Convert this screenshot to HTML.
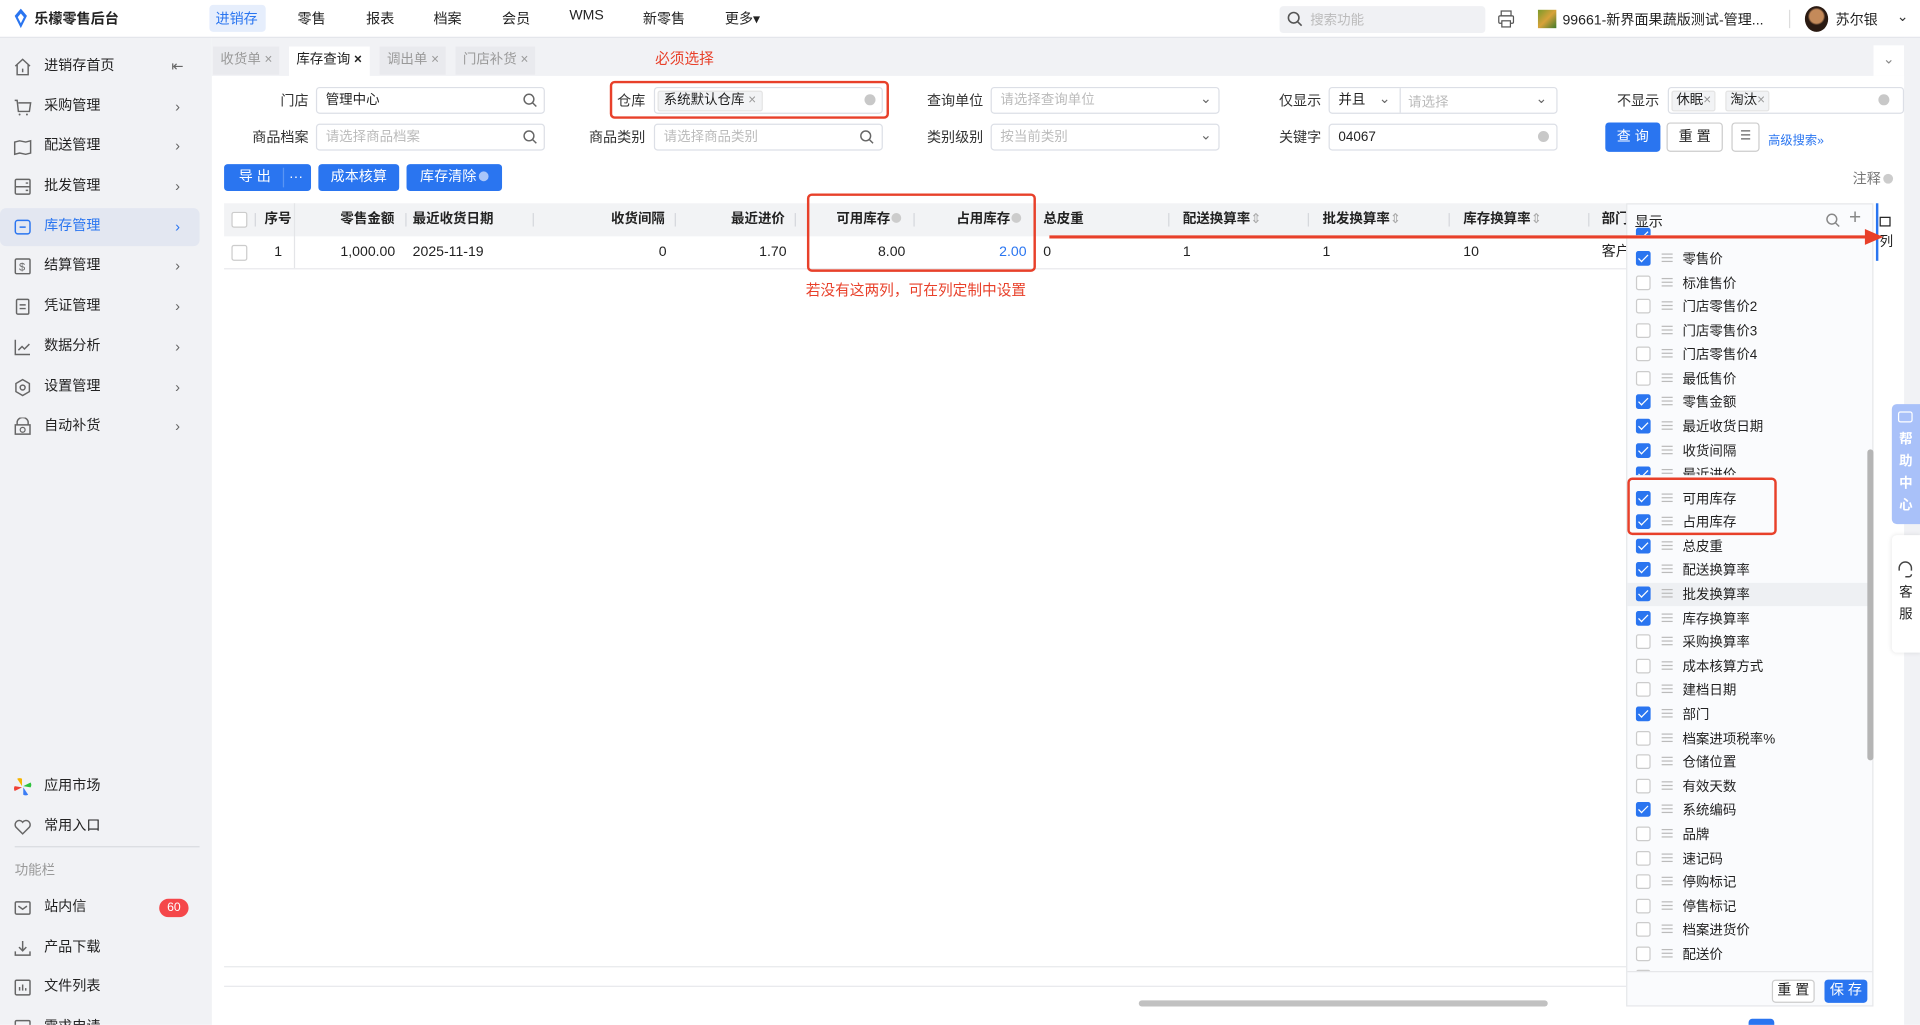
<!DOCTYPE html>
<html><head><meta charset="utf-8">
<style>
*{margin:0;padding:0;box-sizing:border-box}
html,body{width:1920px;height:1025px;overflow:hidden;background:#fff}
body{font-family:"Liberation Sans","Noto Sans CJK SC",sans-serif;font-size:11.5px;color:#222}
#w{position:absolute;left:0;top:0;width:1568px;height:837px;transform:scale(1.22449);transform-origin:0 0;background:#fff;overflow:hidden}
.a{position:absolute;white-space:nowrap}
.hdr{left:0;top:0;width:1568px;height:31px;background:#fff;border-bottom:1px solid #e3e5ea}
.nav{top:7px;font-size:11.5px;color:#222}
.side{left:0;top:31px;width:173px;height:806px;background:#f1f2f5}
.si{left:0;width:163px;height:30px;line-height:30px;font-size:11.5px}
.si .t{position:absolute;left:36px}
.si .ch{position:absolute;left:143px;color:#666;font-size:12px}
.si svg{position:absolute;left:11px;top:8px}
.tabs{left:173px;top:31px;width:1395px;height:31px;background:#f1f2f5}
.tab{top:38px;height:23px;line-height:22px;background:#e9eaee;color:#999;padding:0 6px;font-size:11px}
.lbl{font-size:11.5px;color:#333;text-align:right}
.inp{height:22px;border:1px solid #dcdfe6;border-radius:3px;background:#fff;font-size:11px;line-height:20px;padding-left:7px;color:#bbb}
.btn{height:22px;line-height:22px;background:#2a75f0;color:#fff;border-radius:3px;text-align:center;font-size:11.5px}
.th{top:166px;height:27px;line-height:27px;font-weight:bold;font-size:11px;color:#222}
.td{top:193px;height:26px;line-height:26px;font-size:11.5px}
.cp .it{position:absolute;left:0;height:19px;width:196px}
.cb{position:absolute;left:7px;top:3px;width:12px;height:12px;border:1px solid #ccc;border-radius:2px;background:#fff}
.cb.on{background:#2a75f0;border-color:#2a75f0}
.cb.on:after{content:"";position:absolute;left:3px;top:0px;width:3px;height:7px;border:solid #fff;border-width:0 1.5px 1.5px 0;transform:rotate(45deg)}
.dr{position:absolute;left:28px;top:5px;width:9px;height:7px;border-top:1px solid #bbb;border-bottom:1px solid #bbb}
.dr:after{content:"";position:absolute;left:0;top:2px;width:9px;border-top:1px solid #bbb}
.lt{position:absolute;left:45px;top:1px;font-size:11px;color:#222}
.red{color:#e8402a}
.sep{position:absolute;top:174px;width:1px;height:11px;background:#d5d7dc}
</style></head><body><div id="w">

<div class="a hdr"></div>
<svg class="a" style="left:11px;top:7px" width="12" height="16" viewBox="0 0 12 16"><path d="M6 0 L11 6 L6 16 L1 6Z" fill="#2a75f0"/><path d="M6 4 L8.5 7 L6 12 L3.5 7Z" fill="#fff"/></svg>
<div class="a" style="left:28px;top:7px;font-weight:bold;font-size:11.5px">乐檬零售后台</div>
<div class="a" style="left:171px;top:4px;width:46px;height:22px;background:#e6eefc;border-radius:3px"></div>
<div class="a nav" style="left:176px;color:#2a75f0">进销存</div>
<div class="a nav" style="left:243px">零售</div>
<div class="a nav" style="left:299px">报表</div>
<div class="a nav" style="left:354px">档案</div>
<div class="a nav" style="left:410px">会员</div>
<div class="a nav" style="left:465px">WMS</div>
<div class="a nav" style="left:525px">新零售</div>
<div class="a nav" style="left:592px">更多▾</div>
<div class="a" style="left:1045px;top:5px;width:168px;height:22px;background:#f0f1f4;border-radius:3px"></div>
<svg class="a" style="left:1051px;top:9px" width="13" height="13" viewBox="0 0 13 13"><circle cx="5.5" cy="5.5" r="4.3" stroke="#555" stroke-width="1.3" fill="none"/><path d="M8.7 8.7L12 12" stroke="#555" stroke-width="1.3"/></svg>
<div class="a" style="left:1070px;top:8px;color:#bbb;font-size:11px">搜索功能</div>
<svg class="a" style="left:1223px;top:8px" width="14" height="15" viewBox="0 0 14 15"><rect x="3" y="1" width="8" height="4" fill="none" stroke="#555"/><rect x="1" y="5" width="12" height="6" rx="1" fill="none" stroke="#555"/><rect x="3.5" y="9" width="7" height="5" fill="#fff" stroke="#555"/></svg>
<div class="a" style="left:1256px;top:8px;width:15px;height:15px;background:linear-gradient(135deg,#7a9a2a,#d8a23a,#3e7a2a)"></div>
<div class="a" style="left:1276px;top:8px;font-size:11.5px">99661-新界面果蔬版测试-管理...</div>
<div class="a" style="left:1461px;top:8px;width:1px;height:15px;background:#ddd"></div>
<div class="a" style="left:1474px;top:5px;width:19px;height:21px;border-radius:50%;background:radial-gradient(circle at 50% 40%,#c48a5a 0 35%,#2a1a12 45%)"></div>
<div class="a" style="left:1499px;top:8px">苏尔银</div>
<div class="a" style="left:1549px;top:6px;color:#333">⌄</div>

<div class="a side"></div>
<div class="a" style="left:0;top:170px;width:163px;height:31px;background:#e3e7f1;border-radius:5px"></div>
<div class="a si" style="top:39px"><svg width="15" height="15" viewBox="0 0 15 15"><path d="M1.5 7L7.5 1.5 13.5 7M3 6v8h9V6M7.5 9v3" fill="none" stroke="#666" stroke-width="1.2"/></svg><span class="t">进销存首页</span><span class="ch" style="left:140px">⇤</span></div>
<div class="a si" style="top:72px"><svg width="15" height="15" viewBox="0 0 15 15"><path d="M1 2h2l1 9h9l1-7H4" fill="none" stroke="#666" stroke-width="1.2"/><circle cx="5" cy="13.5" r=".8" fill="#666"/><circle cx="11" cy="13.5" r=".8" fill="#666"/></svg><span class="t">采购管理</span><span class="ch">›</span></div>
<div class="a si" style="top:104px"><svg width="15" height="15" viewBox="0 0 15 15"><path d="M1 4l4-1 5 1 4-1v10l-4 1-5-1-4 1z" fill="none" stroke="#666" stroke-width="1.2"/></svg><span class="t">配送管理</span><span class="ch">›</span></div>
<div class="a si" style="top:137px"><svg width="15" height="15" viewBox="0 0 15 15"><rect x="1.5" y="1.5" width="12" height="12" rx="1" fill="none" stroke="#666" stroke-width="1.2"/><path d="M1.5 7.5h12M10 4.5h2M10 10.5h2" stroke="#666" stroke-width="1.2"/></svg><span class="t">批发管理</span><span class="ch">›</span></div>
<div class="a si" style="top:170px;color:#2a75f0"><svg width="15" height="15" viewBox="0 0 15 15"><rect x="1.5" y="2" width="12" height="11" rx="2" fill="none" stroke="#2a75f0" stroke-width="1.2"/><path d="M5 7.5h5" stroke="#2a75f0" stroke-width="1.2"/></svg><span class="t">库存管理</span><span class="ch" style="color:#2a75f0">›</span></div>
<div class="a si" style="top:202px"><svg width="15" height="15" viewBox="0 0 15 15"><rect x="1.5" y="1.5" width="12" height="12" rx="1" fill="none" stroke="#666" stroke-width="1.2"/><text x="4.5" y="11" font-size="9" fill="#666">$</text></svg><span class="t">结算管理</span><span class="ch">›</span></div>
<div class="a si" style="top:235px"><svg width="15" height="15" viewBox="0 0 15 15"><rect x="2.5" y="1.5" width="10" height="12" rx="1" fill="none" stroke="#666" stroke-width="1.2"/><path d="M5 6h5M5 9h5" stroke="#666" stroke-width="1.2"/></svg><span class="t">凭证管理</span><span class="ch">›</span></div>
<div class="a si" style="top:268px"><svg width="15" height="15" viewBox="0 0 15 15"><path d="M1.5 1.5v12h12M4 10l3-3 2 2 4-4" fill="none" stroke="#666" stroke-width="1.2"/></svg><span class="t">数据分析</span><span class="ch">›</span></div>
<div class="a si" style="top:301px"><svg width="15" height="15" viewBox="0 0 15 15"><path d="M7.5 1l5.5 3.2v6.6L7.5 14 2 10.8V4.2z" fill="none" stroke="#666" stroke-width="1.2"/><circle cx="7.5" cy="7.5" r="2" fill="none" stroke="#666" stroke-width="1.2"/></svg><span class="t">设置管理</span><span class="ch">›</span></div>
<div class="a si" style="top:333px"><svg width="15" height="15" viewBox="0 0 15 15"><path d="M3 6V4a4.5 4 0 0 1 9 0v2M1.5 6h12v7.5h-12z" fill="none" stroke="#666" stroke-width="1.2"/><circle cx="7.5" cy="10" r="2" fill="none" stroke="#666"/></svg><span class="t">自动补货</span><span class="ch">›</span></div>

<div class="a si" style="top:627px"><svg width="15" height="15" viewBox="0 0 15 15"><path d="M7 7L3 1a4 4 0 0 1 4 0z" fill="#f6b400"/><path d="M8 7l6-3a4 4 0 0 1 0 4z" fill="#2ec23c"/><path d="M8 8l4 6a4 4 0 0 1-4 0z" fill="#3a7cf5"/><path d="M7 8L1 11a4 4 0 0 1 0-4z" fill="#ef4135"/></svg><span class="t">应用市场</span></div>
<div class="a si" style="top:660px"><svg width="15" height="15" viewBox="0 0 15 15"><path d="M7.5 13L2 7.5a3 3 0 0 1 5.5-4 3 3 0 0 1 5.5 4z" fill="none" stroke="#666" stroke-width="1.2"/></svg><span class="t">常用入口</span></div>
<div class="a" style="left:12px;top:691px;width:151px;height:1px;background:#d9dbe0"></div>
<div class="a" style="left:12px;top:702px;color:#999;font-size:11px">功能栏</div>
<div class="a si" style="top:726px"><svg width="15" height="15" viewBox="0 0 15 15"><rect x="1.5" y="2.5" width="12" height="10" rx="1" fill="none" stroke="#666" stroke-width="1.2"/><path d="M4 6l3.5 2.5L11 6" fill="none" stroke="#666" stroke-width="1.2"/></svg><span class="t">站内信</span></div>
<div class="a" style="left:130px;top:734px;width:24px;height:15px;border-radius:8px;background:#f5474a;color:#fff;font-size:10px;text-align:center;line-height:15px">60</div>
<div class="a si" style="top:759px"><svg width="15" height="15" viewBox="0 0 15 15"><path d="M7.5 1.5v8M4.5 6.5l3 3 3-3M1.5 10v3h12v-3" fill="none" stroke="#666" stroke-width="1.2"/></svg><span class="t">产品下载</span></div>
<div class="a si" style="top:791px"><svg width="15" height="15" viewBox="0 0 15 15"><rect x="1.5" y="1.5" width="12" height="12" rx="1" fill="none" stroke="#666" stroke-width="1.2"/><path d="M5 10V7M7.5 10V5M10 10V8" stroke="#666" stroke-width="1.2"/></svg><span class="t">文件列表</span></div>
<div class="a si" style="top:824px"><svg width="15" height="15" viewBox="0 0 15 15"><rect x="1.5" y="1.5" width="12" height="12" rx="1" fill="none" stroke="#666" stroke-width="1.2"/></svg><span class="t">需求申请</span></div>

<div class="a tabs"></div>
<div class="a tab" style="left:174px">收货单 ×</div>
<div class="a tab" style="left:236px;background:#fff;color:#222;height:25px">库存查询 <b>×</b></div>
<div class="a tab" style="left:310px">调出单 ×</div>
<div class="a tab" style="left:372px">门店补货 ×</div>
<div class="a" style="left:1530px;top:37px;width:25px;height:25px;background:#fff;color:#888;text-align:center;line-height:24px">⌄</div>
<div class="a" style="left:1555px;top:31px;width:13px;height:806px;background:#f1f2f5"></div>
<div class="a red" style="left:535px;top:39px;font-size:12px">必须选择</div>

<div class="a lbl" style="left:200px;top:74px;width:52px">门店</div>
<div class="a inp" style="left:258px;top:71px;width:187px;color:#222">管理中心</div>
<svg class="a" style="left:427px;top:76px" width="12" height="12" viewBox="0 0 12 12"><circle cx="5" cy="5" r="4" stroke="#666" stroke-width="1.2" fill="none"/><path d="M8 8l3 3" stroke="#666" stroke-width="1.2"/></svg>
<div class="a lbl" style="left:480px;top:74px;width:47px">仓库</div>
<div class="a inp" style="left:534px;top:71px;width:187px"></div>
<div class="a" style="left:537px;top:74px;height:17px;padding:0 4px;background:#f2f3f5;border:1px solid #e4e4e4;border-radius:2px;line-height:15px;font-size:11px">系统默认仓库 <span style="color:#999">×</span></div>
<div class="a" style="left:706px;top:77px;width:9px;height:9px;border-radius:50%;background:#c8c8c8"></div>
<div class="a" style="left:498px;top:66px;width:228px;height:31px;border:2px solid #e8402a;border-radius:4px"></div>
<div class="a lbl" style="left:750px;top:74px;width:53px">查询单位</div>
<div class="a inp" style="left:809px;top:71px;width:187px">请选择查询单位</div>
<div class="a" style="left:980px;top:73px;color:#666">⌄</div>
<div class="a lbl" style="left:1030px;top:74px;width:49px">仅显示</div>
<div class="a inp" style="left:1085px;top:71px;width:187px;color:#222">并且</div>
<div class="a" style="left:1126px;top:73px;color:#666">⌄</div>
<div class="a" style="left:1143px;top:72px;width:1px;height:20px;background:#dcdfe6"></div>
<div class="a" style="left:1150px;top:75px;color:#bbb;font-size:11px">请选择</div>
<div class="a" style="left:1254px;top:73px;color:#666">⌄</div>
<div class="a lbl" style="left:1300px;top:74px;width:55px">不显示</div>
<div class="a inp" style="left:1362px;top:71px;width:193px"></div>
<div class="a" style="left:1365px;top:74px;height:17px;padding:0 3px;background:#f2f3f5;border:1px solid #e4e4e4;border-radius:2px;line-height:15px;font-size:11px">休眠<span style="color:#999">×</span></div>
<div class="a" style="left:1409px;top:74px;height:17px;padding:0 3px;background:#f2f3f5;border:1px solid #e4e4e4;border-radius:2px;line-height:15px;font-size:11px">淘汰<span style="color:#999">×</span></div>
<div class="a" style="left:1534px;top:77px;width:9px;height:9px;border-radius:50%;background:#c8c8c8"></div>

<div class="a lbl" style="left:200px;top:104px;width:52px">商品档案</div>
<div class="a inp" style="left:258px;top:101px;width:187px">请选择商品档案</div>
<svg class="a" style="left:427px;top:106px" width="12" height="12" viewBox="0 0 12 12"><circle cx="5" cy="5" r="4" stroke="#666" stroke-width="1.2" fill="none"/><path d="M8 8l3 3" stroke="#666" stroke-width="1.2"/></svg>
<div class="a lbl" style="left:475px;top:104px;width:52px">商品类别</div>
<div class="a inp" style="left:534px;top:101px;width:187px">请选择商品类别</div>
<svg class="a" style="left:702px;top:106px" width="12" height="12" viewBox="0 0 12 12"><circle cx="5" cy="5" r="4" stroke="#666" stroke-width="1.2" fill="none"/><path d="M8 8l3 3" stroke="#666" stroke-width="1.2"/></svg>
<div class="a lbl" style="left:750px;top:104px;width:53px">类别级别</div>
<div class="a inp" style="left:809px;top:101px;width:187px">按当前类别</div>
<div class="a" style="left:980px;top:103px;color:#666">⌄</div>
<div class="a lbl" style="left:1030px;top:104px;width:49px">关键字</div>
<div class="a inp" style="left:1085px;top:101px;width:187px;color:#222">04067</div>
<div class="a" style="left:1256px;top:107px;width:9px;height:9px;border-radius:50%;background:#c8c8c8"></div>
<div class="a btn" style="left:1311px;top:100px;width:45px;height:24px;line-height:24px">查 询</div>
<div class="a" style="left:1361px;top:100px;width:46px;height:24px;border:1px solid #ccc;border-radius:3px;text-align:center;line-height:22px">重 置</div>
<div class="a" style="left:1414px;top:100px;width:23px;height:24px;border:1px solid #ccc;border-radius:3px;text-align:center;line-height:22px;color:#666;font-size:10px">☰</div>
<div class="a" style="left:1444px;top:106px;color:#2a75f0;font-size:10px">高级搜索»</div>

<div class="a btn" style="left:183px;top:134px;width:71px"><span style="position:absolute;left:12px">导 出</span><span style="position:absolute;left:48px;top:3px;width:1px;height:16px;background:#5a95f3"></span><span style="position:absolute;left:53px">···</span></div>
<div class="a btn" style="left:260px;top:134px;width:66px">成本核算</div>
<div class="a btn" style="left:332px;top:134px;width:78px">库存清除<span style="display:inline-block;width:8px;height:8px;border-radius:50%;background:#a9c6f9;margin-left:2px"></span></div>
<div class="a" style="left:1513px;top:138px;color:#777">注释<span style="display:inline-block;width:8px;height:8px;border-radius:50%;background:#ccc;margin-left:2px"></span></div>

<div class="a" style="left:183px;top:166px;width:1145px;height:27px;background:#f2f3f5"></div>
<div class="a" style="left:183px;top:219px;width:1145px;height:1px;background:#e8e9ec"></div>
<div class="a" style="left:240px;top:166px;width:1px;height:53px;background:#e4e5e8"></div>
<div class="a" style="left:189px;top:173px;width:13px;height:13px;border:1px solid #ccc;background:#fff;border-radius:2px"></div>
<div class="a" style="left:189px;top:200px;width:13px;height:13px;border:1px solid #ccc;background:#fff;border-radius:2px"></div>
<div class="sep" style="left:208px"></div>
<div class="a th" style="left:216px">序号</div>
<div class="a th" style="left:278px">零售金额</div><div class="sep" style="left:331px"></div>
<div class="a th" style="left:337px">最近收货日期</div><div class="sep" style="left:435px"></div>
<div class="a th" style="left:499px">收货间隔</div><div class="sep" style="left:551px"></div>
<div class="a th" style="left:597px">最近进价</div><div class="sep" style="left:649px"></div>
<div class="a th" style="left:683px">可用库存<span style="display:inline-block;width:8px;height:8px;border-radius:50%;background:#ccc;margin-left:1px"></span></div><div class="sep" style="left:746px"></div>
<div class="a th" style="left:781px">占用库存<span style="display:inline-block;width:8px;height:8px;border-radius:50%;background:#ccc;margin-left:1px"></span></div>
<div class="a th" style="left:852px">总皮重</div><div class="sep" style="left:954px"></div>
<div class="a th" style="left:966px">配送换算率<span style="color:#aaa;font-weight:normal">⇕</span></div><div class="sep" style="left:1068px"></div>
<div class="a th" style="left:1080px">批发换算率<span style="color:#aaa;font-weight:normal">⇕</span></div><div class="sep" style="left:1183px"></div>
<div class="a th" style="left:1195px">库存换算率<span style="color:#aaa;font-weight:normal">⇕</span></div><div class="sep" style="left:1297px"></div>
<div class="a th" style="left:1308px">部门</div>
<div class="a td" style="left:224px">1</div>
<div class="a td" style="left:278px">1,000.00</div>
<div class="a td" style="left:337px">2025-11-19</div>
<div class="a td" style="left:538px">0</div>
<div class="a td" style="left:620px">1.70</div>
<div class="a td" style="left:717px">8.00</div>
<div class="a td" style="left:816px;color:#2a75f0">2.00</div>
<div class="a td" style="left:852px">0</div>
<div class="a td" style="left:966px">1</div>
<div class="a td" style="left:1080px">1</div>
<div class="a td" style="left:1195px">10</div>
<div class="a td" style="left:1308px">客户</div>
<div class="a" style="left:659px;top:158px;width:187px;height:64px;border:2px solid #e8402a;border-radius:4px"></div>
<div class="a red" style="left:658px;top:228px;font-size:12px">若没有这两列，可在列定制中设置</div>
<div class="a" style="left:183px;top:789px;width:1145px;height:1px;background:#e8e9ec"></div>
<div class="a" style="left:183px;top:805px;width:1145px;height:1px;background:#e8e9ec"></div>
<div class="a" style="left:930px;top:817px;width:334px;height:5px;border-radius:3px;background:#c1c1c1"></div>

<div class="a cp" style="left:1328px;top:166px;width:202px;height:656px;background:#fafbfd;border:1px solid #e6e7ea">
<div class="a" style="left:6px;top:6px;font-size:11.5px">显示</div>
<svg class="a" style="left:162px;top:7px" width="12" height="12" viewBox="0 0 12 12"><circle cx="5" cy="5" r="4" stroke="#888" stroke-width="1.2" fill="none"/><path d="M8 8l3 3" stroke="#888" stroke-width="1.2"/></svg>
<div class="a" style="left:181px;top:1px;color:#888;font-size:17px">+</div>
<div class="it" style="top:16px;overflow:hidden;height:9px"><span class="cb on"></span></div>
<div class="it" style="top:35px"><span class="cb on"></span><span class="dr"></span><span class="lt">零售价</span></div>
<div class="it" style="top:55px"><span class="cb"></span><span class="dr"></span><span class="lt">标准售价</span></div>
<div class="it" style="top:74px"><span class="cb"></span><span class="dr"></span><span class="lt">门店零售价2</span></div>
<div class="it" style="top:94px"><span class="cb"></span><span class="dr"></span><span class="lt">门店零售价3</span></div>
<div class="it" style="top:113px"><span class="cb"></span><span class="dr"></span><span class="lt">门店零售价4</span></div>
<div class="it" style="top:133px"><span class="cb"></span><span class="dr"></span><span class="lt">最低售价</span></div>
<div class="it" style="top:152px"><span class="cb on"></span><span class="dr"></span><span class="lt">零售金额</span></div>
<div class="it" style="top:172px"><span class="cb on"></span><span class="dr"></span><span class="lt">最近收货日期</span></div>
<div class="it" style="top:192px"><span class="cb on"></span><span class="dr"></span><span class="lt">收货间隔</span></div>
<div class="it" style="top:211px;height:10px;overflow:hidden"><span class="cb on"></span><span class="dr"></span><span class="lt">最近进价</span></div>
<div class="it" style="top:231px"><span class="cb on"></span><span class="dr"></span><span class="lt">可用库存</span></div>
<div class="it" style="top:250px"><span class="cb on"></span><span class="dr"></span><span class="lt">占用库存</span></div>
<div class="it" style="top:270px"><span class="cb on"></span><span class="dr"></span><span class="lt">总皮重</span></div>
<div class="it" style="top:289px"><span class="cb on"></span><span class="dr"></span><span class="lt">配送换算率</span></div>
<div class="it" style="top:309px;background:#eef0f3;width:200px"><span class="cb on"></span><span class="dr"></span><span class="lt">批发换算率</span></div>
<div class="it" style="top:329px"><span class="cb on"></span><span class="dr"></span><span class="lt">库存换算率</span></div>
<div class="it" style="top:348px"><span class="cb"></span><span class="dr"></span><span class="lt">采购换算率</span></div>
<div class="it" style="top:368px"><span class="cb"></span><span class="dr"></span><span class="lt">成本核算方式</span></div>
<div class="it" style="top:387px"><span class="cb"></span><span class="dr"></span><span class="lt">建档日期</span></div>
<div class="it" style="top:407px"><span class="cb on"></span><span class="dr"></span><span class="lt">部门</span></div>
<div class="it" style="top:427px"><span class="cb"></span><span class="dr"></span><span class="lt">档案进项税率%</span></div>
<div class="it" style="top:446px"><span class="cb"></span><span class="dr"></span><span class="lt">仓储位置</span></div>
<div class="it" style="top:466px"><span class="cb"></span><span class="dr"></span><span class="lt">有效天数</span></div>
<div class="it" style="top:485px"><span class="cb on"></span><span class="dr"></span><span class="lt">系统编码</span></div>
<div class="it" style="top:505px"><span class="cb"></span><span class="dr"></span><span class="lt">品牌</span></div>
<div class="it" style="top:525px"><span class="cb"></span><span class="dr"></span><span class="lt">速记码</span></div>
<div class="it" style="top:544px"><span class="cb"></span><span class="dr"></span><span class="lt">停购标记</span></div>
<div class="it" style="top:564px"><span class="cb"></span><span class="dr"></span><span class="lt">停售标记</span></div>
<div class="it" style="top:583px"><span class="cb"></span><span class="dr"></span><span class="lt">档案进货价</span></div>
<div class="it" style="top:603px"><span class="cb"></span><span class="dr"></span><span class="lt">配送价</span></div>
<div class="it" style="top:622px;height:4px;overflow:hidden"><span class="cb"></span></div>
<div class="a" style="left:0;top:626px;width:200px;height:1px;background:#e6e7ea"></div>
<div class="a" style="left:118px;top:633px;width:35px;height:19px;border:1px solid #ccc;border-radius:3px;background:#fff;text-align:center;line-height:17px">重 置</div>
<div class="a btn" style="left:161px;top:633px;width:35px;height:19px;line-height:19px">保 存</div>
<div class="a" style="left:196px;top:200px;width:5px;height:254px;border-radius:3px;background:#b5b5b5"></div>
</div>
<div class="a" style="left:1329px;top:390px;width:122px;height:47px;border:2px solid #e8402a;border-radius:4px"></div>

<div class="a" style="left:1532px;top:166px;width:23px;height:47px;border-left:2px solid #2a75f0;background:#fff"></div>
<div class="a" style="left:1535px;top:177px;width:9px;height:8px;border:1.5px solid #222"></div>
<div class="a" style="left:1535px;top:189px;font-size:11px">列</div>
<svg class="a" style="left:855px;top:184px" width="690" height="20" viewBox="0 0 690 20"><path d="M2 9.5H672" stroke="#e8402a" stroke-width="2.5"/><path d="M668 3L683 9.5 668 16z" fill="#e8402a"/></svg>

<div class="a" style="left:1545px;top:330px;width:23px;height:98px;background:#a9c1f9;border-radius:4px 0 0 4px;color:#fff;font-size:11px;text-align:center;line-height:18px;padding-top:20px;font-weight:bold">帮<br>助<br>中<br>心</div>
<div class="a" style="left:1550px;top:336px;width:12px;height:9px;border:1.3px solid #fff;border-radius:2px"></div>
<div class="a" style="left:1545px;top:437px;width:23px;height:96px;background:#fff;border-radius:4px 0 0 4px;box-shadow:0 0 4px rgba(0,0,0,.1);font-size:11px;text-align:center;line-height:18px;padding-top:38px">客<br>服</div>
<svg class="a" style="left:1549px;top:458px" width="14" height="14" viewBox="0 0 14 14"><path d="M2 8V6a5 5 0 0 1 10 0v2M7 13h3a2 2 0 0 0 2-2" fill="none" stroke="#444" stroke-width="1.2"/></svg>
<div class="a" style="left:1428px;top:832px;width:21px;height:8px;background:#2a75f0;border-radius:3px"></div>
</div></body></html>
